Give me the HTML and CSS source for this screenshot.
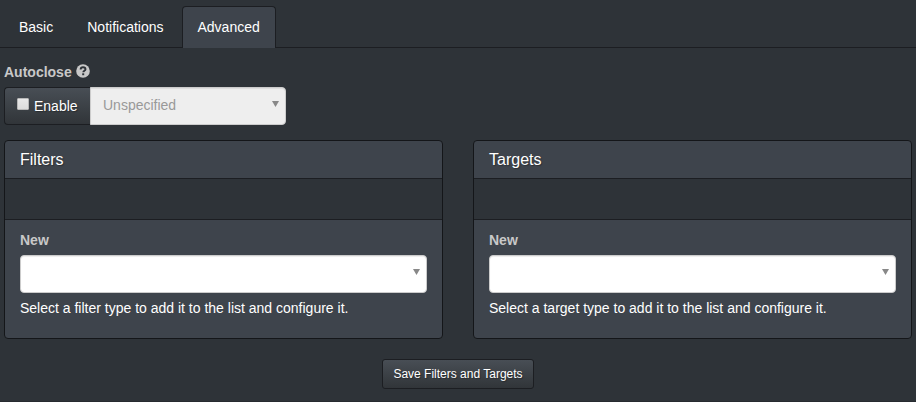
FILE: index.html
```html
<!DOCTYPE html>
<html lang="en">
<head>
<meta charset="utf-8">
<title>Filters and Targets</title>
<link rel="stylesheet" href="styles.css">
</head>
<body>
<nav class="tabs">
  <a class="tab">Basic</a>
  <a class="tab">Notifications</a>
  <a class="tab tab-active">Advanced</a>
</nav>
<main class="content">
  <div class="label autoclose">Autoclose
    <svg class="help" viewBox="0 0 14 14"><circle cx="7" cy="7" r="6.8" fill="#c8c8c8"/><path d="M4.600 5.500C4.700 3.900 5.700 3.200 7 3.200c1.400 0 2.500.8 2.500 2.100 0 1.500-2.200 1.500-2.200 3" fill="none" stroke="#2e3338" stroke-width="1.900"/><path d="M6.200 9.300h2v1.900h-2z" fill="#2e3338"/></svg>
  </div>
  <div class="group">
    <label class="addon"><span class="check"></span>Enable</label>
    <div class="select select-disabled"><span>Unspecified</span><i class="arrow"></i></div>
  </div>
  <div class="columns">
    <section class="panel">
      <h3 class="heading">Filters</h3>
      <div class="list"></div>
      <div class="footer">
        <div class="label">New</div>
        <div class="select"><span></span><i class="arrow"></i></div>
        <p class="hint">Select a filter type to add it to the list and configure it.</p>
      </div>
    </section>
    <section class="panel">
      <h3 class="heading">Targets</h3>
      <div class="list"></div>
      <div class="footer">
        <div class="label">New</div>
        <div class="select"><span></span><i class="arrow"></i></div>
        <p class="hint">Select a target type to add it to the list and configure it.</p>
      </div>
    </section>
  </div>
  <div class="actions"><button class="save">Save Filters and Targets</button></div>
</main>
</body>
</html>
```
FILE: styles.css
```css
* { box-sizing: border-box; }
body {
  margin: 0;
  height: 402px;
  overflow: hidden;
  background: #2e3338;
  color: #fff;
  font: 14px/20px "Liberation Sans", Arial, sans-serif;
  border-bottom: 1px solid #272b30;
}
.tabs {
  display: flex;
  gap: 2px;
  height: 48px;
  padding: 6px 0 0 3px;
  border-bottom: 1px solid #1c1e22;
}
.tab {
  height: 42px;
  padding: 10px 15px;
  border: 1px solid transparent;
  border-bottom: 0;
  border-radius: 4px 4px 0 0;
}
.tab-active { background: #3e444c; border-color: #1c1e22; }
.content { padding: 14px 4px 0; }
.label { color: #c8c8c8; font-weight: bold; height: 20px; margin-bottom: 5px; }
.autoclose { display: flex; align-items: center; gap: 4px; }
.help { width: 14px; height: 14px; margin-top: -2px; }
.group { display: flex; width: 282px; height: 38px; }
.addon {
  display: flex;
  align-items: center;
  width: 86px;
  padding: 0 0 0 12px;
  border: 1px solid #1c1e22;
  border-right: 0;
  border-radius: 4px 0 0 4px;
  background: linear-gradient(#484e55, #3a3f44 60%, #313539);
  text-shadow: 1px 1px 1px rgba(0, 0, 0, .3);
}
.check {
  width: 12px;
  height: 12px;
  margin: -4px 5px 0 0;
  border: 1px solid #b8b8b8;
  border-radius: 1px;
  background: linear-gradient(#e8e8e8, #dcdcdc);
}
.select {
  display: flex;
  align-items: center;
  justify-content: space-between;
  height: 38px;
  padding: 0 6px 0 12px;
  border: 1px solid #ccc;
  border-radius: 4px;
  background: #fff;
  box-shadow: inset 0 1px 1px rgba(0, 0, 0, .075);
}
.select-disabled {
  flex: 1;
  padding-bottom: 2px;
  border-radius: 0 4px 4px 0;
  background: #eee;
  color: #999;
}
.select-disabled .arrow { margin-top: -2px; }
.arrow {
  width: 7px;
  height: 6px;
  margin-top: -4px;
  background: #888;
  clip-path: polygon(0 0, 100% 0, 50% 100%);
}
.columns { display: grid; grid-template-columns: 439px 439px; gap: 30px; margin-top: 15px; }
.panel { height: 199px; border: 1px solid #141619; border-radius: 4px; background: #3e444c; overflow: hidden; }
.heading {
  height: 38px;
  margin: 0;
  padding: 10px 15px;
  font-size: 16px;
  line-height: 17px;
  font-weight: normal;
  text-shadow: 1px 1px 1px rgba(0, 0, 0, .3);
}
.list { height: 42px; border: solid #1c1e22; border-width: 1px 0; background: #2e3338; margin-top: -1px; }
.footer { padding: 10px 15px; }
.hint { margin: 5px 0 0; }
.actions { display: flex; justify-content: center; margin-top: 20px; }
.save {
  width: 152px;
  height: 30px;
  padding: 0;
  border: 1px solid #1c1e22;
  border-radius: 3px;
  background: linear-gradient(#484e55, #3a3f44 60%, #313539);
  color: #fff;
  font: 12px/18px "Liberation Sans", Arial, sans-serif;
  text-shadow: 1px 1px 1px rgba(0, 0, 0, .3);
}
```
